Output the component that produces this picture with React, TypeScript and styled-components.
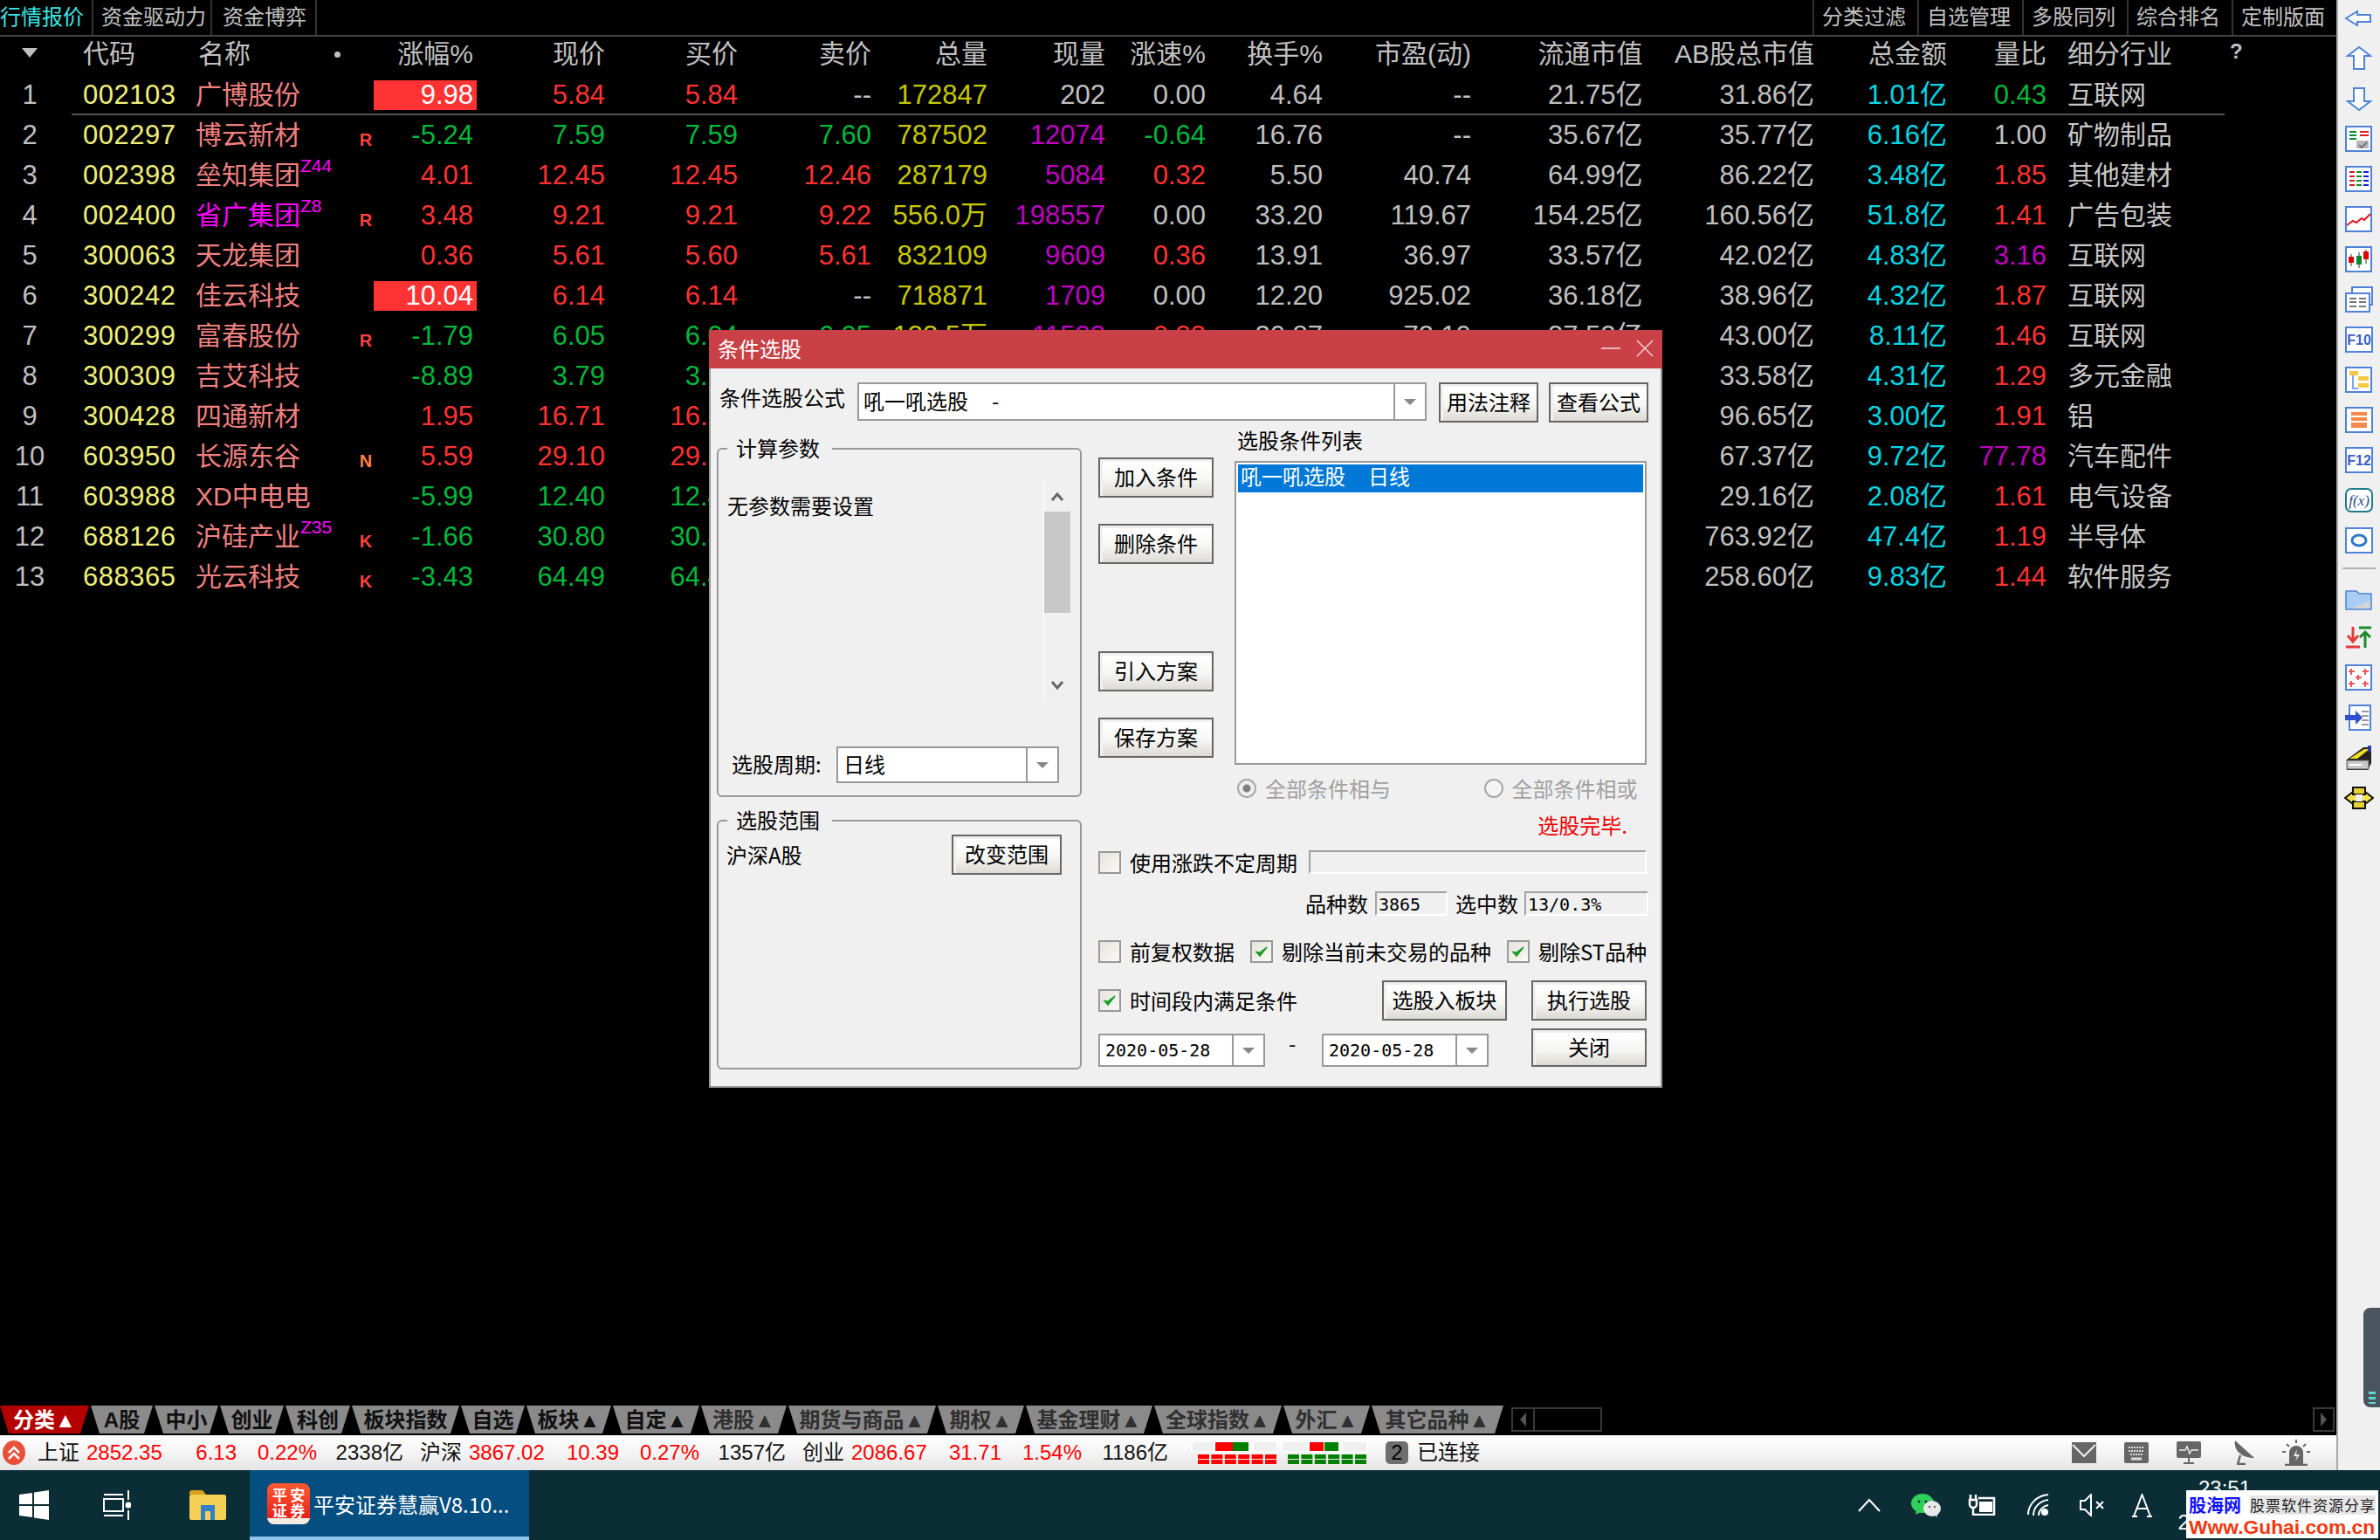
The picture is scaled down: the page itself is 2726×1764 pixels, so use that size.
import React from "react";
import styled, { createGlobalStyle } from "styled-components";

const Global = createGlobalStyle`
  html, body { margin: 0; padding: 0; background: #000; }
  * { box-sizing: border-box; }
`;

const FONT = `"Liberation Sans", "Noto Sans CJK SC", sans-serif`;
const COLS = "68px 156px 186px 18px 118px 147px 152px 153px 133px 135px 115px 134px 170px 196.5px 196.5px 152px 114px 1fr";

const C = {
  red: "#ff3232", green: "#00b83c", grey: "#c0c0c0", purple: "#c000c0",
  olive: "#c8c800", cyan: "#00d8e4", code: "#eef078", name: "#f08080", magenta: "#ff00ff",
};

const Page = styled.div`
  width: 2726px; height: 1764px; overflow: hidden; position: relative;
  display: flex; flex-direction: column; background: #000; font-family: ${FONT};
`;
const Upper = styled.div`flex: 1; display: flex; min-height: 0;`;
const Market = styled.div`flex: 1; display: flex; flex-direction: column; min-width: 0;`;

/* top tab bar */
const TopBar = styled.div`
  height: 42px; display: flex; justify-content: space-between;
  border-bottom: 2px solid #444; flex: none;
`;
const TabGroup = styled.div`display: flex;`;
const TopTab = styled.div<{ $active?: boolean; $pl: number; $w: number }>`
  height: 40px; line-height: 40px; font-size: 24px; white-space: nowrap;
  width: ${p => p.$w}px; padding-left: ${p => p.$pl}px;
  color: ${p => (p.$active ? "#3ce6e6" : "#c0c0c0")};
  border-right: 2px solid #333;
`;
const RightTab = styled(TopTab)`
  border-right: none; border-left: 2px solid #333;
`;

/* table */
const Table = styled.div`flex: 1; min-height: 0; position: relative;`;
const GridRow = styled.div`
  display: grid; grid-template-columns: ${COLS}; white-space: nowrap;
`;
const HeadRow = styled(GridRow)`height: 44px; color: #c0c0c0; line-height: 40px; font-size: 30px; align-items: start;`;
const DataRow = styled(GridRow)<{ $rule?: boolean }>`
  height: 46px; line-height: 46px; position: relative; font-size: 31px; align-items: center;
  ${p => p.$rule && `
    &::after { content: ""; position: absolute; left: 82px; width: 2466px; bottom: 0; height: 2px; background: #555; }
  `}
`;
const IdxCell = styled.div`text-align: center; color: #c0c0c0;`;
const SortMark = styled.div`
  justify-self: center; width: 0; height: 0; margin-top: 13px;
  border-left: 9px solid transparent; border-right: 9px solid transparent; border-top: 11px solid #c0c0c0;
`;
const CodeCell = styled.div`padding-left: 27px; color: ${C.code}; letter-spacing: 0.5px;`;
const HeadCode = styled.div`padding-left: 27px;`;
const HeadName = styled.div`padding-left: 3px; display: flex; align-items: center; justify-content: space-between; padding-right: 20px;`;
const Dot = styled.i`width: 7px; height: 7px; border-radius: 50%; background: #c0c0c0;`;
const NameCell = styled.div<{ $color?: string }>`color: ${p => p.$color || C.name}; font-size: 30px;`;
const Sup = styled.span`
  font-size: 21px; color: ${C.magenta}; vertical-align: 14px; line-height: 0;
`;
const Flag = styled.div<{ $color: string }>`
  font-size: 20px; font-weight: bold; text-align: center; color: ${p => p.$color}; padding-top: 10px; line-height: 36px;
`;
const Num = styled.div<{ $color?: string }>`
  text-align: right; color: ${p => p.$color || C.grey};
`;
const Change = styled.div<{ $color: string; $box?: boolean }>`
  height: 34px; line-height: 34px; text-align: right; padding-right: 4px;
  color: ${p => (p.$box ? "#fff" : p.$color)};
  background: ${p => (p.$box ? "#ff3333" : "transparent")};
`;
const HeadNum = styled.div<{ $pad?: number }>`text-align: right; padding-right: ${p => p.$pad || 0}px;`;
const Industry = styled.div`padding-left: 24px; color: #c8c8c8; font-size: 30px;`;
const HeadIndustry = styled.div`padding-left: 24px; display: flex; align-items: flex-start; gap: 66px; height: 40px;`;
const Help = styled.span`font-size: 24px; font-weight: bold; line-height: 34px;`;

/* sheet tabs */
const SheetBar = styled.div`
  height: 34px; flex: none; display: flex; padding-right: 2px;
`;
const Sheet = styled.div<{ $w: number; $on?: boolean; $dim?: boolean }>`
  width: ${p => p.$w - 2}px; margin-right: 2px; height: 32px; line-height: 33px;
  text-align: center; font-size: 24px; font-weight: bold; white-space: nowrap;
  background: ${p => (p.$on ? "#b40000" : "#8a8a8a")};
  color: ${p => (p.$on ? "#fff" : p.$dim ? "#303030" : "#101010")};
  clip-path: polygon(0 0, 100% 0, calc(100% - 10px) 100%, 10px 100%);
`;
const HScroll = styled.div`
  margin-left: auto; display: flex; height: 28px; margin-top: 2px;
`;
const HTrack = styled.div`
  width: 104px; border: 2px solid #3a3a3a; display: flex; align-items: center; margin-left: 7px;
`;
const HBtnInner = styled.div`
  width: 25px; height: 100%; border-right: 2px solid #3a3a3a;
  display: flex; align-items: center; justify-content: center;
`;
const HBtn = styled.div`
  width: 25px; height: 28px; border: 2px solid #3a3a3a; margin-left: 814px;
  display: flex; align-items: center; justify-content: center;
`;
const TriL = styled.i`
  width: 0; height: 0; border-top: 8px solid transparent; border-bottom: 8px solid transparent; border-right: 7px solid #555;
`;
const TriR = styled.i`
  width: 0; height: 0; border-top: 8px solid transparent; border-bottom: 8px solid transparent; border-left: 7px solid #555;
`;

/* status bar */
const StatusBar = styled.div`
  height: 40px; flex: none; display: flex; align-items: center;
  background: linear-gradient(#ffffff, #f6f6f6 45%, #e4e4e4);
  font-size: 24px; color: #111; white-space: nowrap; position: relative;
`;
const StatusLogo = styled.div`
  width: 28px; height: 28px; margin-left: 2px; flex: none; display: flex;
  align-items: center; justify-content: center;
`;
const Indices = styled.div`display: flex; gap: 19px; margin-left: 13px;`;
const IndexGroup = styled.div`
  display: grid; grid-template-columns: 56px 88px 84px 92px 99px; line-height: 36px;
`;
const IndexVal = styled.span<{ $right?: boolean; $red?: boolean }>`
  text-align: ${p => (p.$right ? "right" : "left")};
  color: ${p => (p.$red ? "#ff0000" : "#111")};
`;
const Strips = styled.svg`margin-left: 26px; flex: none;`;
const Badge = styled.div`
  width: 26px; height: 26px; margin-left: 20px; border-radius: 5px; background: #6e6e6e;
  color: #000; text-align: center; line-height: 26px; flex: none;
`;
const Linked = styled.span`margin-left: 10px; line-height: 36px;`;
const StatusIcons = styled.div`
  margin-left: auto; display: flex; align-items: center; gap: 32px; padding-right: 30px;
`;

/* sidebar */
const Side = styled.div`
  width: 50px; flex: none; background: #f0f0f0; border-left: 2px solid #a8a8a8;
  position: relative; display: flex; flex-direction: column; align-items: center;
`;
const SideList = styled.div`margin-top: -2px; display: flex; flex-direction: column; align-items: center;`;
const SideSlot = styled.div`height: 46px; display: flex; align-items: center; justify-content: center;`;
const SideSep = styled.div`width: 38px; height: 2px; background: #b0b0b0; margin: 8px 0 9px;`;
const SideGrip = styled.div`
  position: absolute; left: 29px; top: 1498px; width: 19px; height: 114px;
  background: #4a5560; border-radius: 8px 0 0 8px;
  &::after {
    content: ""; position: absolute; left: 6px; bottom: 4px; width: 8px; height: 14px;
    background: repeating-linear-gradient(#5fd8d0 0 3px, transparent 3px 6px);
  }
`;

/* taskbar */
const TaskBar = styled.div`
  height: 80px; flex: none; background: #0b2d35; display: flex; align-items: center;
  color: #fff; position: relative;
`;
const TaskSlot = styled.div<{ $w: number }>`
  width: ${p => p.$w}px; height: 100%; display: flex; align-items: center; justify-content: center; flex: none;
`;
const ActiveApp = styled.div`
  width: 320px; height: 100%; background: #054e80; border-bottom: 4px solid #8fc3ea;
  display: flex; align-items: center; padding-left: 20px; gap: 4px; flex: none; font-size: 24px;
  font-family: "Noto Sans CJK SC", sans-serif; white-space: nowrap;
`;
const AppIcon = styled.div`
  width: 49px; height: 47px; border-radius: 8px; background: linear-gradient(#ff5a30, #e8261e 80%);
  display: grid; grid-template-columns: 1fr 1fr; font-size: 17px; line-height: 18px; font-weight: bold;
  text-align: center; color: #fff; padding: 4px 4px 8px; position: relative; overflow: hidden;
  &::after { content: ""; position: absolute; left: 0; right: 0; bottom: 0; height: 7px; background: #f2ece4; }
`;
const Tray = styled.div`margin-left: auto; display: flex; align-items: center; height: 100%;`;
const TraySlot = styled.div<{ $w: number }>`
  width: ${p => p.$w}px; display: flex; justify-content: center; align-items: center;
`;
const Clock = styled.div`
  width: 124px; padding-left: 12px; text-align: center; font-size: 24px; line-height: 39px; margin-right: 122px;
  white-space: nowrap;
`;
const Watermark = styled.div`
  position: absolute; right: 2px; bottom: 2px; width: 220px; height: 55px; background: #fff;
  display: flex; flex-direction: column; padding: 4px 3px 0 3px;
`;
const WmTop = styled.div`display: flex; align-items: center; justify-content: space-between; height: 26px;`;
const WmBrand = styled.span`
  color: #1010ff; font-size: 20px; font-weight: bold; font-family: "Noto Sans CJK SC", sans-serif; line-height: 24px;
`;
const WmSlogan = styled.span`
  color: #222; font-size: 17px; letter-spacing: 1px; line-height: 22px; white-space: nowrap;
  background: #e6e6e6; font-family: "Noto Sans CJK SC", sans-serif;
`;
const WmUrl = styled.div`color: #f2380f; font-size: 22.8px; font-weight: bold; line-height: 24px; white-space: nowrap;`;

/* dialog */
const Dialog = styled.div`
  position: absolute; left: 812px; top: 378px; width: 1092px; height: 868px;
  background: #f0f0f0; border: 2px solid #999; border-top: none; color: #000;
  font-family: "Noto Sans CJK SC", "Liberation Sans", sans-serif; font-size: 24px; line-height: 24px;
  white-space: nowrap; z-index: 5;
`;
const TitleBar = styled.div`
  height: 44px; margin: 0 -2px; background: #c94147; color: #fff; display: flex; align-items: center;
  padding: 0 0 2px 10px;
`;
const TitleActions = styled.div`margin-left: auto; display: flex; align-items: center; gap: 18px; padding: 0 10px 0 0;`;
const Body = styled.div`padding: 16px 14px 0 7px;`;
const FormulaRow = styled.div`display: flex; height: 46px;`;
const FormulaLabel = styled.div`width: 161px; padding-left: 3px; line-height: 34px;`;
const Combo = styled.div<{ $w: number; $h: number }>`
  width: ${p => p.$w}px; height: ${p => p.$h}px; flex: none; background: #fff; border: 2px solid #999;
  display: flex; align-items: center;
`;
const ComboText = styled.div<{ $pad?: number }>`flex: 1; padding: 0 0 3px ${p => p.$pad ?? 5}px; color: #000;`;
const MonoText = styled.span`font-family: "DejaVu Sans Mono", monospace; font-size: 20px;`;
const DashMark = styled.span`margin-left: 27px;`;
const DropBtn = styled.div<{ $w: number }>`
  width: ${p => p.$w}px; height: 100%; border-left: 2px solid #999;
  display: flex; align-items: center; justify-content: center;
`;
const DropArrow = styled.i`
  width: 0; height: 0; border-left: 7px solid transparent; border-right: 7px solid transparent; border-top: 7px solid #888;
`;
const WinBtn = styled.button<{ $w: number; $ml?: number; $mt?: number; $h?: number }>`
  width: ${p => p.$w}px; height: ${p => p.$h || 46}px; margin-left: ${p => p.$ml || 0}px; margin-top: ${p => p.$mt || 0}px;
  flex: none; padding: 0 0 3px; border: 2px solid #666; color: #000;
  font: inherit; line-height: 24px;
  background: linear-gradient(#ffffff 10%, #f6f6f4 55%, #dcdad4);
  box-shadow: inset 3px 3px 0 #f0f0f0;
`;
const Main = styled.div`display: flex;`;
const LeftCol = styled.div`width: 418px; padding-top: 29px; display: flex; flex-direction: column; gap: 26px; flex: none;`;
const Group = styled.div<{ $h: number }>`
  height: ${p => p.$h}px; border: 2px solid #999; border-radius: 6px; position: relative;
`;
const Legend = styled.div`
  position: absolute; left: 10px; top: -14px; padding: 0 14px 0 10px; background: #f0f0f0;
`;
const ParamRow = styled.div`display: flex; height: 287px; padding-top: 37px;`;
const ParamText = styled.div`flex: 1; padding: 15px 0 0 10px;`;
const VScroll = styled.div`
  width: 31px; height: 250px; margin-right: 11px; border-left: 1px solid #fff; display: flex;
  flex-direction: column; align-items: center; flex: none;
`;
const ChevSlot = styled.div`
  height: 34px; width: 100%; display: flex; justify-content: center;
  align-items: center;
`;
const Thumb = styled.div`width: 100%; height: 116px; background: #c8c8c8; margin-bottom: 66px;`;
const PeriodRow = styled.div`display: flex; align-items: center; margin-top: 53px;`;
const PeriodLabel = styled.div`width: 135px; padding: 0 0 3px 15px;`;
const ScopeRow = styled.div`display: flex; justify-content: space-between; align-items: center; padding: 15px 21px 0 9px;`;
const RightArea = styled.div`width: 630px; margin-left: 19px; flex: none;`;
const TopSplit = styled.div`display: flex;`;
const BtnCol = styled.div`width: 132px; padding-top: 40px; display: flex; flex-direction: column; flex: none;`;
const ListCol = styled.div`margin-left: 24px; width: 472px;`;
const ListTitle = styled.div`padding: 8px 0 12px 3px;`;
const ListBox = styled.div`height: 348px; background: #fff; border: 2px solid #999; padding: 2px;`;
const ListItem = styled.div`
  height: 32px; background: #0078d7; color: #fff; padding-left: 3px; line-height: 26px;
`;
const ListGap = styled.span`margin-left: 26px;`;
const RadioRow = styled.div`display: flex; margin: 14px 0 0 159px; height: 25px;`;
const RadioItem = styled.div<{ $w: number }>`
  width: ${p => p.$w}px; display: flex; align-items: center; gap: 10px; color: #a0a0a0;
`;
const Radio = styled.i<{ $on?: boolean }>`
  width: 22px; height: 22px; border-radius: 50%; flex: none;
  border: 2px solid #a8a8a8; background: radial-gradient(circle, ${p => (p.$on ? "#808080 0 4px, #efefef 5px" : "#f4f4f4 0 5px, #f4f4f4 6px")});
`;
const Done = styled.div`color: #f00000; text-align: right; padding-right: 24px; margin-top: 18px;`;
const UseRow = styled.div`display: flex; align-items: center; margin-top: 17px;`;
const CheckLabel = styled.div<{ $ml?: number; $w?: number }>`
  display: flex; align-items: center; gap: 10px; margin-left: ${p => p.$ml || 0}px;
  ${p => p.$w && `width: ${p.$w}px;`} flex: none;
`;
const CheckBox = styled.div`
  width: 26px; height: 26px; border: 2px solid #999; background: linear-gradient(135deg, #e6e3dc, #faf9f6);
  display: flex; align-items: center; justify-content: center; flex: none;
`;
const Sunken = styled.div<{ $w: number; $h: number; $ml?: number }>`
  width: ${p => p.$w}px; height: ${p => p.$h}px; margin-left: ${p => p.$ml || 0}px; flex: none;
  border-top: 2px solid #a0a0a0; border-left: 2px solid #a0a0a0; border-right: 2px solid #fff; border-bottom: 2px solid #fff;
  padding-left: 2px; line-height: 20px;
`;
const StatRow = styled.div`display: flex; align-items: center; margin-top: 20px; padding-left: 237px;`;
const StatLabel = styled.div<{ $ml?: number }>`margin-left: ${p => p.$ml || 0}px;`;
const ChecksRow = styled.div`display: flex; align-items: center; margin-top: 28px;`;
const BottomGrid = styled.div`
  display: grid; grid-template-columns: 325px 143px 28px 132px; row-gap: 9px; margin-top: 20px;
  align-items: center;
`;
const DateRow = styled.div`
  grid-column: 1 / 4; display: flex; align-items: flex-end; height: 44px;
`;
const DateDash = styled.span`margin: 0 0 15px 27px; width: 38px;`;

/* ---------- small drawings ---------- */
const Tick = () => (
  <svg width="16" height="16" viewBox="0 0 16 16"><path d="M2 8.5 L6 13 L14 3 L6 9 Z" fill="#1f9e2b" stroke="#1f9e2b" strokeWidth="1.5" /></svg>
);
const Chevron = ({ up }: { up?: boolean }) => (
  <svg width="14" height="12" viewBox="0 0 14 12">
    <path d={up ? "M1 10 L7 3 L13 10" : "M1 2 L7 9 L13 2"} fill="none" stroke="#666" strokeWidth="3" />
  </svg>
);
const B = "#4f82d8";
const sideIcons: React.ReactNode[] = [
  <polygon key="a" points="2,16 15,8 15,12 30,12 30,20 15,20 15,24" fill="#fff" stroke={B} strokeWidth="2" />,
  <polygon key="b" points="17,3 30,13 23,13 23,28 11,28 11,13 4,13" fill="#fff" stroke={B} strokeWidth="2" />,
  <polygon key="c" points="11,4 23,4 23,19 30,19 17,29 4,19 11,19" fill="#fff" stroke={B} strokeWidth="2" />,
  <g key="d"><rect x="2" y="2" width="29" height="28" fill="#fff" stroke={B} strokeWidth="2" /><path d="M6 8h8M6 12h8M6 16h8" stroke="#0a8a2a" strokeWidth="2" /><path d="M18 8h10M18 12h10" stroke="#e01818" strokeWidth="2" /><rect x="14" y="18" width="14" height="9" fill="#b8b8b8" /><path d="M17 23l3 3 6-6" fill="none" stroke="#777" strokeWidth="2" /></g>,
  <g key="e"><rect x="2" y="2" width="29" height="28" fill="#fff" stroke={B} strokeWidth="2" /><path d="M6 8h6M6 13h6M6 18h6M6 23h6" stroke="#d81818" strokeWidth="2" /><path d="M14 8h6M14 13h6M14 18h6M14 23h6" stroke="#0a8a2a" strokeWidth="2" /><path d="M22 8h6M22 13h6M22 18h6M22 23h6" stroke="#1818d8" strokeWidth="2" /></g>,
  <g key="f"><rect x="2" y="2" width="29" height="28" fill="#fff" stroke={B} strokeWidth="2" /><path d="M3 23l7-5 4 2 6-5 3 2 7-7" fill="none" stroke="#e01818" strokeWidth="2" /></g>,
  <g key="g"><rect x="2" y="2" width="29" height="28" fill="#fff" stroke={B} strokeWidth="2" /><path d="M8 10v14M17 8v18M25 5v16" stroke="#333" strokeWidth="1" /><rect x="5" y="13" width="6" height="7" fill="#e00000" /><rect x="14" y="12" width="6" height="10" fill="#0a8a2a" /><rect x="22" y="7" width="6" height="9" fill="#e00000" /></g>,
  <g key="h"><rect x="9" y="2" width="23" height="20" fill="#fff" stroke={B} strokeWidth="2" /><rect x="2" y="9" width="27" height="21" fill="#fff" stroke={B} strokeWidth="2" /><path d="M6 15h8M6 19h8M6 24h8M17 15h8M17 19h8M17 24h8" stroke="#777" strokeWidth="2" /></g>,
  <g key="i"><rect x="2" y="2" width="30" height="28" fill="#fff" stroke={B} strokeWidth="2" /><text x="17" y="22" textAnchor="middle" fontFamily="Liberation Sans" fontWeight="bold" fontSize="16" fill="#3a5cc8">F10</text></g>,
  <g key="j"><rect x="2" y="2" width="29" height="28" fill="#fff" stroke={B} strokeWidth="2" /><rect x="6" y="6" width="10" height="5" fill="#f5c842" /><path d="M10 11v15h6" fill="none" stroke="#7aa8e8" strokeWidth="2" /><rect x="16" y="12" width="12" height="5" fill="#f5c842" /><rect x="16" y="20" width="12" height="5" fill="#f5c842" /></g>,
  <g key="k"><rect x="2" y="2" width="30" height="28" fill="#fff" stroke={B} strokeWidth="2" /><rect x="8" y="7" width="18" height="18" fill="#f58a4a" /><path d="M8 12h18M8 18h18" stroke="#fff" strokeWidth="2" /></g>,
  <g key="l"><rect x="2" y="2" width="30" height="28" fill="#fff" stroke={B} strokeWidth="2" /><text x="17" y="22" textAnchor="middle" fontFamily="Liberation Sans" fontWeight="bold" fontSize="16" fill="#3a5cc8">F12</text></g>,
  <g key="m"><rect x="2" y="3" width="30" height="26" rx="6" fill="#fff" stroke="#1f7a8a" strokeWidth="2" /><text x="17" y="22" textAnchor="middle" fontFamily="Liberation Serif" fontStyle="italic" fontSize="17" fill="#1f4a8a">f(x)</text></g>,
  <g key="n"><rect x="2" y="2" width="30" height="28" fill="#fff" stroke={B} strokeWidth="2" /><ellipse cx="17" cy="16" rx="8" ry="6" fill="none" stroke="#2f78c8" strokeWidth="3" /></g>,
];
const sideIcons2: React.ReactNode[] = [
  <g key="a"><path d="M2 9h12l3 3h14v18H2z" fill="#a8ccf4" stroke={B} strokeWidth="1.5" /><path d="M8 29l22-9v9z" fill="#d4d4d4" /></g>,
  <g key="b"><path d="M10 4v16M4 14l6 7 6-7" fill="none" stroke="#e83a3a" strokeWidth="3" /><path d="M2 27h16" stroke="#e83a3a" strokeWidth="3" /><path d="M24 28V11M18 16l6-6 6 6" fill="none" stroke="#1a8a2a" strokeWidth="3" /><path d="M17 5h14" stroke="#1a8a2a" strokeWidth="3" /></g>,
  <g key="c"><rect x="2" y="2" width="29" height="28" fill="#fff" stroke={B} strokeWidth="2" /><path d="M5 9h7M8 6v7M21 9h7M24 6v7M13 16h7M16 13v6M5 23h7M8 20v7M21 23h7M24 20v7" stroke="#ee5555" strokeWidth="2" /></g>,
  <g key="d"><rect x="6" y="2" width="24" height="28" fill="#fff" stroke={B} strokeWidth="2" /><path d="M20 9h8M20 14h8M20 19h8M20 24h8" stroke="#999" strokeWidth="2" /><path d="M1 13h12V8l8 8-8 8v-5H1z" fill="#2f4fd0" /></g>,
  <g key="e"><path d="M3 18 L22 4 h9 v18 L27 30 H3z" fill="#222" /><path d="M6 17 L23 6 h6 L15 17z" fill="#f0e020" /><rect x="3" y="19" width="25" height="10" fill="#c8c8c8" stroke="#555" /><path d="M6 24h14" stroke="#fff" strokeWidth="2" /><rect x="27" y="2" width="4" height="7" fill="#2838a8" /></g>,
  <g key="f"><path d="M1 16l9-7h14l9 7-9 7H10z" fill="#f5e050" stroke="#111" strokeWidth="2" /><path d="M10 4h14v8H10zM10 20h14v8H10z" fill="#e8d030" stroke="#111" strokeWidth="2" /><rect x="13" y="12" width="8" height="8" fill="#eee" /></g>,
];
const Svg34 = ({ children }: { children: React.ReactNode }) => (
  <svg width="34" height="32" viewBox="0 0 34 32">{children}</svg>
);
const G = "#666";
const MailIcon = () => (
  <svg width="28" height="24" viewBox="0 0 28 24"><rect width="28" height="24" fill={G} /><path d="M1 3l13 13L27 3" fill="none" stroke="#eee" strokeWidth="2" /></svg>
);
const KeysIcon = () => (
  <svg width="28" height="24" viewBox="0 0 28 24"><rect width="28" height="24" rx="2" fill={G} /><path d="M5 6h18M5 10h18M7 14h14" stroke="#ddd" strokeWidth="2" strokeDasharray="2 1" /><path d="M8 19h12" stroke="#ddd" strokeWidth="3" /></svg>
);
const MonitorIcon = () => (
  <svg width="33" height="26" viewBox="0 0 33 26"><rect width="28" height="19" rx="2" fill={G} /><path d="M3 10h7l2-4 3 8 2-4h8" fill="none" stroke="#eee" strokeWidth="1.5" /><path d="M14 19v5M8 25h12" stroke={G} strokeWidth="2" /></svg>
);
const DishIcon = () => (
  <svg width="24" height="28" viewBox="0 0 24 28"><path d="M2 0 C0 10 8 20 24 20 Z" fill={G} /><path d="M8 17l-3 10M4 27h10" stroke={G} strokeWidth="2.5" /></svg>
);
const SirenIcon = () => (
  <svg width="32" height="30" viewBox="0 0 32 30"><path d="M8 28V15a8 8 0 0 1 16 0v13z" fill={G} /><path d="M17 11l-4 8h4l-2 6 5-8h-4z" fill="#eee" /><path d="M3 29h26" stroke={G} strokeWidth="2.5" /><path d="M16 0v4M5 5l3 3M27 5l-3 3M0 14h4M28 14h4" stroke={G} strokeWidth="2" /></svg>
);
const Strip = (x: number, y: number, w: number, h: number, f: string) => <rect key={`${x}-${y}-${f}`} x={x} y={y} width={w} height={h} fill={f} />;
const StatusStrips = () => {
  const cells: React.ReactNode[] = [];
  cells.push(Strip(0, 0, 100, 12, "#fff"), Strip(2, 1, 24, 10, "#efefef"), Strip(28, 1, 20, 10, "#ff0000"), Strip(48, 1, 18, 10, "#008000"), Strip(72, 1, 26, 10, "#efefef"));
  cells.push(Strip(103, 0, 100, 12, "#fff"), Strip(105, 1, 28, 10, "#efefef"), Strip(136, 1, 16, 10, "#ff0000"), Strip(153, 1, 16, 10, "#008000"), Strip(174, 1, 27, 10, "#efefef"));
  for (let i = 0; i < 6; i++) {
    for (const y of [15, 21]) {
      cells.push(Strip(8 + i * 15.4, y, 13, 5, "#ff0000"));
      cells.push(Strip(111 + i * 15.4, y, 13, 5, "#008000"));
    }
  }
  return <Strips width="203" height="26" viewBox="0 0 203 26">{cells}</Strips>;
};

/* ---------- data ---------- */
type RowData = {
  i: number; code: string; name: string; nameColor?: string; sup?: string; flag?: string; chg: string; box?: boolean;
  price: string; buy: string; sell: string; vol: string; cur: string; curColor: string; spd: string;
  turn: string; pe: string; float: string; total: string; amt: string; ratio: string; ratioColor: string; ind: string;
};
const rows: RowData[] = [
  { i: 1, code: "002103", name: "广博股份", chg: "9.98", box: true, price: "5.84", buy: "5.84", sell: "--", vol: "172847", cur: "202", curColor: C.grey, spd: "0.00", turn: "4.64", pe: "--", float: "21.75亿", total: "31.86亿", amt: "1.01亿", ratio: "0.43", ratioColor: C.green, ind: "互联网" },
  { i: 2, code: "002297", name: "博云新材", flag: "R", chg: "-5.24", price: "7.59", buy: "7.59", sell: "7.60", vol: "787502", cur: "12074", curColor: C.purple, spd: "-0.64", turn: "16.76", pe: "--", float: "35.67亿", total: "35.77亿", amt: "6.16亿", ratio: "1.00", ratioColor: C.grey, ind: "矿物制品" },
  { i: 3, code: "002398", name: "垒知集团", sup: "Z44", chg: "4.01", price: "12.45", buy: "12.45", sell: "12.46", vol: "287179", cur: "5084", curColor: C.purple, spd: "0.32", turn: "5.50", pe: "40.74", float: "64.99亿", total: "86.22亿", amt: "3.48亿", ratio: "1.85", ratioColor: C.red, ind: "其他建材" },
  { i: 4, code: "002400", name: "省广集团", nameColor: C.magenta, sup: "Z8", flag: "R", chg: "3.48", price: "9.21", buy: "9.21", sell: "9.22", vol: "556.0万", cur: "198557", curColor: C.purple, spd: "0.00", turn: "33.20", pe: "119.67", float: "154.25亿", total: "160.56亿", amt: "51.8亿", ratio: "1.41", ratioColor: C.red, ind: "广告包装" },
  { i: 5, code: "300063", name: "天龙集团", chg: "0.36", price: "5.61", buy: "5.60", sell: "5.61", vol: "832109", cur: "9609", curColor: C.purple, spd: "0.36", turn: "13.91", pe: "36.97", float: "33.57亿", total: "42.02亿", amt: "4.83亿", ratio: "3.16", ratioColor: C.purple, ind: "互联网" },
  { i: 6, code: "300242", name: "佳云科技", chg: "10.04", box: true, price: "6.14", buy: "6.14", sell: "--", vol: "718871", cur: "1709", curColor: C.purple, spd: "0.00", turn: "12.20", pe: "925.02", float: "36.18亿", total: "38.96亿", amt: "4.32亿", ratio: "1.87", ratioColor: C.red, ind: "互联网" },
  { i: 7, code: "300299", name: "富春股份", flag: "R", chg: "-1.79", price: "6.05", buy: "6.04", sell: "6.05", vol: "133.5万", cur: "11533", curColor: C.purple, spd: "0.33", turn: "20.87", pe: "72.19", float: "37.52亿", total: "43.00亿", amt: "8.11亿", ratio: "1.46", ratioColor: C.red, ind: "互联网" },
  { i: 8, code: "300309", name: "吉艾科技", chg: "-8.89", price: "3.79", buy: "3.79", sell: "3.80", vol: "100.1万", cur: "5120", curColor: C.purple, spd: "0.00", turn: "12.50", pe: "--", float: "30.12亿", total: "33.58亿", amt: "4.31亿", ratio: "1.29", ratioColor: C.red, ind: "多元金融" },
  { i: 9, code: "300428", name: "四通新材", chg: "1.95", price: "16.71", buy: "16.71", sell: "16.72", vol: "180012", cur: "2210", curColor: C.purple, spd: "0.06", turn: "4.10", pe: "48.20", float: "73.40亿", total: "96.65亿", amt: "3.00亿", ratio: "1.91", ratioColor: C.red, ind: "铝" },
  { i: 10, code: "603950", name: "长源东谷", flag: "N", chg: "5.59", price: "29.10", buy: "29.10", sell: "29.11", vol: "334120", cur: "3012", curColor: C.purple, spd: "0.10", turn: "14.40", pe: "22.10", float: "67.37亿", total: "67.37亿", amt: "9.72亿", ratio: "77.78", ratioColor: C.purple, ind: "汽车配件" },
  { i: 11, code: "603988", name: "XD中电电", chg: "-5.99", price: "12.40", buy: "12.40", sell: "12.41", vol: "167520", cur: "1880", curColor: C.purple, spd: "0.00", turn: "7.16", pe: "31.25", float: "29.16亿", total: "29.16亿", amt: "2.08亿", ratio: "1.61", ratioColor: C.red, ind: "电气设备" },
  { i: 12, code: "688126", name: "沪硅产业", sup: "Z35", flag: "K", chg: "-1.66", price: "30.80", buy: "30.80", sell: "30.81", vol: "153830", cur: "1290", curColor: C.purple, spd: "0.00", turn: "8.12", pe: "--", float: "58.33亿", total: "763.92亿", amt: "47.4亿", ratio: "1.19", ratioColor: C.red, ind: "半导体" },
  { i: 13, code: "688365", name: "光云科技", flag: "K", chg: "-3.43", price: "64.49", buy: "64.49", sell: "64.50", vol: "152110", cur: "980", curColor: C.purple, spd: "0.00", turn: "15.20", pe: "96.40", float: "64.80亿", total: "258.60亿", amt: "9.83亿", ratio: "1.44", ratioColor: C.red, ind: "软件服务" },
];
const headers = ["涨幅%", "现价", "买价", "卖价", "总量", "现量", "涨速%", "换手%", "市盈(动)", "流通市值", "AB股总市值", "总金额", "量比"];
const tone = (v: string) => (v.startsWith("-") ? C.green : C.red);
const speedTone = (v: string) => (v === "0.00" ? C.grey : tone(v));
const sheets: [string, number][] = [
  ["分类▲", 104], ["A股", 73], ["中小", 75], ["创业", 75], ["科创", 76], ["板块指数", 125], ["自选", 75], ["板块▲", 99],
  ["自定▲", 101], ["港股▲", 100], ["期货与商品▲", 171], ["期权▲", 101], ["基金理财▲", 147], ["全球指数▲", 148], ["外汇▲", 101], ["其它品种▲", 153],
];
const indices = [
  ["上证", "2852.35", "6.13", "0.22%", "2338亿"],
  ["沪深", "3867.02", "10.39", "0.27%", "1357亿"],
  ["创业", "2086.67", "31.71", "1.54%", "1186亿"],
];

export default function App() {
  return (
    <Page>
      <Global />
      <Upper>
        <Market>
          <TopBar>
            <TabGroup>
              <TopTab $active $pl={0} $w={107}>行情报价</TopTab>
              <TopTab $pl={9} $w={136}>资金驱动力</TopTab>
              <TopTab $pl={12} $w={120}>资金博弈</TopTab>
            </TabGroup>
            <TabGroup>
              {["分类过滤", "自选管理", "多股同列", "综合排名", "定制版面"].map(t => <RightTab key={t} $pl={9} $w={120}>{t}</RightTab>)}
            </TabGroup>
          </TopBar>
          <Table>
            <HeadRow>
              <SortMark />
              <HeadCode>代码</HeadCode>
              <HeadName>名称<Dot /></HeadName>
              <div />
              {headers.map((h, i) => <HeadNum key={h} $pad={i === 0 ? 4 : 0}>{h}</HeadNum>)}
              <HeadIndustry>细分行业<Help>?</Help></HeadIndustry>
            </HeadRow>
            {rows.map(r => (
              <DataRow key={r.code} $rule={r.i === 1}>
                <IdxCell>{r.i}</IdxCell>
                <CodeCell>{r.code}</CodeCell>
                <NameCell $color={r.nameColor}>{r.name}{r.sup && <Sup>{r.sup}</Sup>}</NameCell>
                <Flag $color={r.flag === "N" ? "#ff8040" : "#ff4040"}>{r.flag}</Flag>
                <Change $color={tone(r.chg)} $box={r.box}>{r.chg}</Change>
                <Num $color={tone(r.chg)}>{r.price}</Num>
                <Num $color={tone(r.chg)}>{r.buy}</Num>
                <Num $color={r.sell === "--" ? C.grey : tone(r.chg)}>{r.sell}</Num>
                <Num $color={C.olive}>{r.vol}</Num>
                <Num $color={r.curColor}>{r.cur}</Num>
                <Num $color={speedTone(r.spd)}>{r.spd}</Num>
                <Num>{r.turn}</Num>
                <Num>{r.pe}</Num>
                <Num>{r.float}</Num>
                <Num>{r.total}</Num>
                <Num $color={C.cyan}>{r.amt}</Num>
                <Num $color={r.ratioColor}>{r.ratio}</Num>
                <Industry>{r.ind}</Industry>
              </DataRow>
            ))}
          </Table>
          <SheetBar>
            {sheets.map(([t, w], i) => <Sheet key={t} $w={w} $on={i === 0} $dim={i > 8}>{t}</Sheet>)}
            <HScroll>
              <HTrack><HBtnInner><TriL /></HBtnInner></HTrack>
              <HBtn><TriR /></HBtn>
            </HScroll>
          </SheetBar>
          <StatusBar>
            <StatusLogo>
              <svg width="26" height="28" viewBox="0 0 26 28">
                <ellipse cx="13" cy="14" rx="13" ry="14" fill="#e8503a" />
                <path d="M7 14l6-6 6 6M7 21l6-6 6 6" fill="none" stroke="#fff" strokeWidth="2.5" />
              </svg>
            </StatusLogo>
            <Indices>
              {indices.map(g => (
                <IndexGroup key={g[0]}>
                  <IndexVal>{g[0]}</IndexVal>
                  <IndexVal $red>{g[1]}</IndexVal>
                  <IndexVal $red $right>{g[2]}</IndexVal>
                  <IndexVal $red $right>{g[3]}</IndexVal>
                  <IndexVal $right>{g[4]}</IndexVal>
                </IndexGroup>
              ))}
            </Indices>
            <StatusStrips />
            <Badge>2</Badge>
            <Linked>已连接</Linked>
            <StatusIcons>
              <MailIcon /><KeysIcon /><MonitorIcon /><DishIcon /><SirenIcon />
            </StatusIcons>
          </StatusBar>
        </Market>
        <Side>
          <SideList>
            {sideIcons.map((s, i) => <SideSlot key={i}><Svg34>{s}</Svg34></SideSlot>)}
            <SideSep />
            {sideIcons2.map((s, i) => <SideSlot key={i}><Svg34>{s}</Svg34></SideSlot>)}
          </SideList>
          <SideGrip />
        </Side>
      </Upper>

      <TaskBar>
        <TaskSlot $w={77}>
          <svg width="34" height="34" viewBox="0 0 34 34" fill="#fff">
            <polygon points="0,5 15,3 15,16 0,16" /><polygon points="17,2.6 34,0 34,16 17,16" />
            <polygon points="0,18 15,18 15,31 0,29" /><polygon points="17,18 34,18 34,34 17,31.4" />
          </svg>
        </TaskSlot>
        <TaskSlot $w={113}>
          <svg width="32" height="34" viewBox="0 0 32 34" fill="none" stroke="#fff" strokeWidth="2">
            <path d="M1 5h22M1 29h22" /><rect x="1" y="10" width="22" height="14" /><path d="M29 0v11M29 23v11" /><circle cx="29" cy="17" r="2.5" fill="#fff" />
          </svg>
        </TaskSlot>
        <TaskSlot $w={96}>
          <svg width="42" height="34" viewBox="0 0 42 34">
            <path d="M0 3a3 3 0 0 1 3-3h12l4 5H0z" fill="#d9a118" />
            <rect y="5" width="42" height="29" rx="2" fill="#f6cf55" />
            <rect x="13" y="17" width="16" height="17" fill="#2f82c8" /><rect x="18" y="24" width="6" height="10" fill="#f6cf55" />
          </svg>
        </TaskSlot>
        <ActiveApp>
          <AppIcon><span>平</span><span>安</span><span>证</span><span>券</span></AppIcon>
          平安证券慧赢V8.10...
        </ActiveApp>
        <Tray>
          <TraySlot $w={64}>
            <svg width="26" height="16" viewBox="0 0 26 16"><path d="M1 15L13 2l12 13" fill="none" stroke="#fff" strokeWidth="2" /></svg>
          </TraySlot>
          <TraySlot $w={65}>
            <svg width="34" height="27" viewBox="0 0 34 27">
              <ellipse cx="13" cy="11" rx="13" ry="11" fill="#2fd05a" /><path d="M6 19l-1 5 6-3z" fill="#2fd05a" />
              <circle cx="9" cy="9" r="1.5" fill="#0b2d35" /><circle cx="17" cy="9" r="1.5" fill="#0b2d35" />
              <ellipse cx="24" cy="17" rx="10" ry="9" fill="#e8e8e8" /><path d="M26 24l4 3-1-5z" fill="#e8e8e8" />
              <circle cx="21" cy="15" r="1.2" fill="#666" /><circle cx="27" cy="15" r="1.2" fill="#666" />
            </svg>
          </TraySlot>
          <TraySlot $w={64}>
            <svg width="32" height="24" viewBox="0 0 32 24" fill="none" stroke="#fff" strokeWidth="2.5">
              <path d="M3 0v6M9 0v6M2 6h8v5a4 4 0 0 1-8 0zM6 15v8h24V4H12" /><rect x="13" y="8" width="15" height="12" fill="#fff" stroke="none" />
            </svg>
          </TraySlot>
          <TraySlot $w={64}>
            <svg width="26" height="26" viewBox="0 0 26 26" fill="none" stroke="#fff" strokeWidth="2">
              <path d="M2 24C2 12 12 2 25 1M8 25C8 15 16 8 25 7M14 25c0-6 5-11 11-12" /><circle cx="21" cy="21" r="4" fill="#fff" stroke="none" />
            </svg>
          </TraySlot>
          <TraySlot $w={60}>
            <svg width="28" height="26" viewBox="0 0 28 26" fill="none" stroke="#fff" strokeWidth="2">
              <path d="M1 8h5l7-7v24l-7-7H1z" /><path d="M19 9l8 8M27 9l-8 8" />
            </svg>
          </TraySlot>
          <TraySlot $w={54}>
            <svg width="23" height="27" viewBox="0 0 23 27" fill="none" stroke="#fff" strokeWidth="2">
              <path d="M2 26L11.5 1 21 26M6 17h11M0 26h6M17 26h6" />
            </svg>
          </TraySlot>
          <Clock>23:51<br />2020/5/28</Clock>
        </Tray>
        <Watermark>
          <WmTop><WmBrand>股海网</WmBrand><WmSlogan>股票软件资源分享</WmSlogan></WmTop>
          <WmUrl>Www.Guhai.com.cn</WmUrl>
        </Watermark>
      </TaskBar>

      <Dialog>
        <TitleBar>
          条件选股
          <TitleActions>
            <svg width="22" height="2" viewBox="0 0 22 2"><rect width="22" height="2" fill="#e8b8ba" /></svg>
            <svg width="20" height="20" viewBox="0 0 20 20"><path d="M1 1l18 18M19 1L1 19" stroke="#f0d0d0" strokeWidth="1.5" /></svg>
          </TitleActions>
        </TitleBar>
        <Body>
          <FormulaRow>
            <FormulaLabel>条件选股公式</FormulaLabel>
            <Combo $w={652} $h={44}>
              <ComboText>吼一吼选股<DashMark>-</DashMark></ComboText>
              <DropBtn $w={36}><DropArrow /></DropBtn>
            </Combo>
            <WinBtn $w={114} $ml={14}>用法注释</WinBtn>
            <WinBtn $w={114} $ml={12}>查看公式</WinBtn>
          </FormulaRow>
          <Main>
            <LeftCol>
              <Group $h={400}>
                <Legend>计算参数</Legend>
                <ParamRow>
                  <ParamText>无参数需要设置</ParamText>
                  <VScroll>
                    <ChevSlot><Chevron up /></ChevSlot>
                    <Thumb />
                    <ChevSlot><Chevron /></ChevSlot>
                  </VScroll>
                </ParamRow>
                <PeriodRow>
                  <PeriodLabel>选股周期:</PeriodLabel>
                  <Combo $w={255} $h={42}>
                    <ComboText $pad={6}>日线</ComboText>
                    <DropBtn $w={36}><DropArrow /></DropBtn>
                  </Combo>
                </PeriodRow>
              </Group>
              <Group $h={286}>
                <Legend>选股范围</Legend>
                <ScopeRow>
                  沪深A股
                  <WinBtn $w={126}>改变范围</WinBtn>
                </ScopeRow>
              </Group>
            </LeftCol>
            <RightArea>
              <TopSplit>
                <BtnCol>
                  <WinBtn $w={132}>加入条件</WinBtn>
                  <WinBtn $w={132} $mt={30}>删除条件</WinBtn>
                  <WinBtn $w={132} $mt={100}>引入方案</WinBtn>
                  <WinBtn $w={132} $mt={30}>保存方案</WinBtn>
                </BtnCol>
                <ListCol>
                  <ListTitle>选股条件列表</ListTitle>
                  <ListBox>
                    <ListItem>吼一吼选股<ListGap>日线</ListGap></ListItem>
                  </ListBox>
                </ListCol>
              </TopSplit>
              <RadioRow>
                <RadioItem $w={285}><Radio $on />全部条件相与</RadioItem>
                <RadioItem $w={190}><Radio />全部条件相或</RadioItem>
              </RadioRow>
              <Done>选股完毕.</Done>
              <UseRow>
                <CheckLabel $w={241}><CheckBox />使用涨跌不定周期</CheckLabel>
                <Sunken $w={387} $h={27} />
              </UseRow>
              <StatRow>
                <StatLabel>品种数</StatLabel>
                <Sunken $w={83} $h={28} $ml={8}><MonoText>3865</MonoText></Sunken>
                <StatLabel $ml={9}>选中数</StatLabel>
                <Sunken $w={142} $h={28} $ml={7}><MonoText>13/0.3%</MonoText></Sunken>
              </StatRow>
              <ChecksRow>
                <CheckLabel $w={174}><CheckBox />前复权数据</CheckLabel>
                <CheckLabel $w={294}><CheckBox><Tick /></CheckBox>剔除当前未交易的品种</CheckLabel>
                <CheckLabel><CheckBox><Tick /></CheckBox>剔除ST品种</CheckLabel>
              </ChecksRow>
              <BottomGrid>
                <CheckLabel><CheckBox><Tick /></CheckBox>时间段内满足条件</CheckLabel>
                <WinBtn $w={143}>选股入板块</WinBtn>
                <div />
                <WinBtn $w={132}>执行选股</WinBtn>
                <DateRow>
                  <Combo $w={191} $h={38}>
                    <ComboText $pad={6}><MonoText>2020-05-28</MonoText></ComboText>
                    <DropBtn $w={36}><DropArrow /></DropBtn>
                  </Combo>
                  <DateDash>-</DateDash>
                  <Combo $w={191} $h={38}>
                    <ComboText $pad={6}><MonoText>2020-05-28</MonoText></ComboText>
                    <DropBtn $w={36}><DropArrow /></DropBtn>
                  </Combo>
                </DateRow>
                <WinBtn $w={132} $h={44}>关闭</WinBtn>
              </BottomGrid>
            </RightArea>
          </Main>
        </Body>
      </Dialog>
    </Page>
  );
}
